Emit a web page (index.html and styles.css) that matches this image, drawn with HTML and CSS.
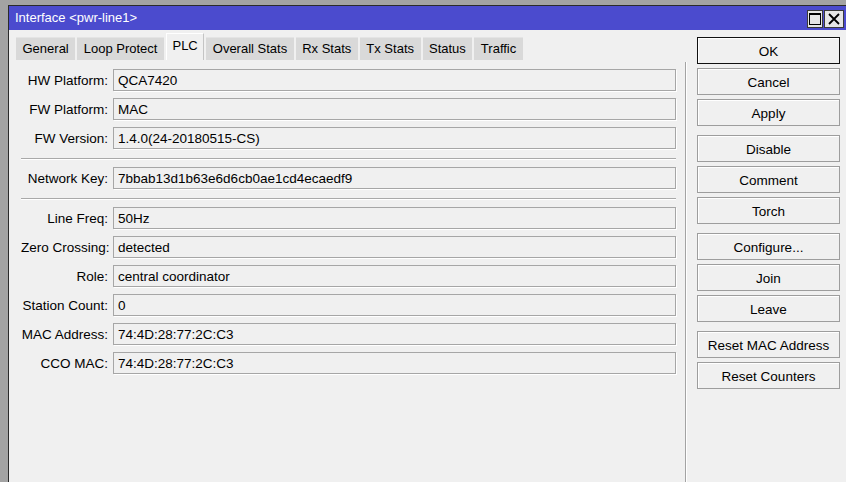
FILE: index.html
```html
<!DOCTYPE html>
<html lang="en">

<head>
    <meta charset="UTF-8">
    <title>Interface &lt;pwr-line1&gt;</title>
    <link rel="stylesheet" href="styles.css">
</head>

<body>

    <div class="window">
        <div class="titlebar">
            <span class="title">Interface &lt;pwr-line1&gt;</span>
            <div class="controls">
                <span class="ctl">
                    <svg width="14" height="14" viewBox="0 0 14 14">
                        <rect x="1.5" y="1.5" width="11" height="11" fill="none" stroke="#000" stroke-width="1"/>
                        <rect x="1" y="1" width="12" height="2" fill="#000"/>
                    </svg>
                </span>
                <span class="ctl">
                    <svg width="14" height="14" viewBox="0 0 14 14">
                        <path d="M2 2 L12 12 M12 2 L2 12" stroke="#000" stroke-width="1.8" fill="none"/>
                    </svg>
                </span>
            </div>
        </div>

        <div class="content">
            <div class="main">
                <div class="tabs">
                    <div class="tab">General</div>
                    <div class="tab">Loop Protect</div>
                    <div class="tab active">PLC</div>
                    <div class="tab">Overall Stats</div>
                    <div class="tab">Rx Stats</div>
                    <div class="tab">Tx Stats</div>
                    <div class="tab">Status</div>
                    <div class="tab">Traffic</div>
                </div>

                <div class="panel">
                    <div class="row"><label>HW Platform:</label><div class="field">QCA7420</div></div>
                    <div class="row"><label>FW Platform:</label><div class="field">MAC</div></div>
                    <div class="row"><label>FW Version:</label><div class="field">1.4.0(24-20180515-CS)</div></div>
                    <div class="sep"></div>
                    <div class="row"><label>Network Key:</label><div class="field">7bbab13d1b63e6d6cb0ae1cd4ecaedf9</div></div>
                    <div class="sep"></div>
                    <div class="row"><label>Line Freq:</label><div class="field">50Hz</div></div>
                    <div class="row"><label>Zero Crossing:</label><div class="field">detected</div></div>
                    <div class="row"><label>Role:</label><div class="field">central coordinator</div></div>
                    <div class="row"><label>Station Count:</label><div class="field">0</div></div>
                    <div class="row"><label>MAC Address:</label><div class="field">74:4D:28:77:2C:C3</div></div>
                    <div class="row"><label>CCO MAC:</label><div class="field">74:4D:28:77:2C:C3</div></div>
                </div>
            </div>

            <div class="divider"></div>

            <div class="side">
                <button class="btn default">OK</button>
                <button class="btn">Cancel</button>
                <button class="btn">Apply</button>
                <button class="btn group">Disable</button>
                <button class="btn">Comment</button>
                <button class="btn">Torch</button>
                <button class="btn group">Configure...</button>
                <button class="btn">Join</button>
                <button class="btn">Leave</button>
                <button class="btn group">Reset MAC Address</button>
                <button class="btn">Reset Counters</button>
            </div>
        </div>
    </div>

</body>

</html>
```

FILE: styles.css
```css
* {
    margin: 0;
    padding: 0;
    box-sizing: border-box;
}

html, body {
    height: 100%;
    overflow: hidden;
}

body {
    font-family: "Liberation Sans", Arial, sans-serif;
    font-size: 13.5px;
    color: #000;
    background-color: #a3a3a3;
    padding: 5px 0 0 8px;
}

.window {
    height: 100%;
    border-top: 1px solid #2b2b2b;
    border-left: 1px solid #2b2b2b;
    background-color: #f0f0f0;
    display: flex;
    flex-direction: column;
}

.titlebar {
    height: 24px;
    background-color: #4b4bce;
    color: #fff;
    font-size: 13px;
    display: flex;
    align-items: center;
    justify-content: space-between;
    padding: 0 2px 0 6px;
}

.title {
    padding-bottom: 1px;
}

.controls {
    display: flex;
    gap: 1px;
    margin-top: 1px;
}

.ctl {
    width: 16px;
    height: 18px;
    background-color: #e6e6e6;
    border: 1px solid #3a3a3a;
    display: flex;
    align-items: center;
    justify-content: center;
}

.ctl:last-child {
    width: 20px;
}

.content {
    flex: 1;
    display: flex;
}

.main {
    width: 676px;
}

.tabs {
    display: flex;
    align-items: flex-end;
    gap: 2px;
    height: 30px;
    padding-left: 7px;
}

.tab {
    height: 23px;
    line-height: 22px;
    padding: 0 6.5px;
    font-size: 13px;
    background-color: #d9d9d9;
    border-top: 1px solid #e4e4e4;
}

.tab.active {
    height: 27px;
    line-height: 23px;
    background-color: #f0f0f0;
    border-top: 1px solid #fff;
    border-left: 1px solid #fff;
    border-right: 1px solid #c4c4c4;
    padding: 0 5.5px;
}

.panel {
    display: flex;
    flex-direction: column;
    gap: 7px;
    padding: 9px 0 0 12px;
}

.row {
    display: flex;
    align-items: center;
    gap: 5px;
}

.row label {
    width: 87px;
    padding-top: 1px;
    text-align: right;
    white-space: nowrap;
}

.field {
    width: 563px;
    height: 22px;
    line-height: 20px;
    padding: 1px 0 0 4px;
    border: 1px solid #a6a6a6;
    box-shadow: 1px 1px 0 #fff;
}

.sep {
    height: 2px;
    width: 655px;
    margin-top: 2px;
    border-top: 1px solid #a9a9a9;
    border-bottom: 1px solid #fff;
}

.divider {
    width: 2px;
    margin-top: 32px;
    border-left: 1px solid #a3a3a3;
    border-right: 1px solid #fff;
}

.side {
    display: flex;
    flex-direction: column;
    gap: 4px;
    padding: 7px 0 0 10px;
}

.btn {
    width: 143px;
    height: 27px;
    padding-top: 1px;
    font-family: inherit;
    font-size: 13.5px;
    color: #000;
    background-color: #f0f0f0;
    border: 1px solid #9d9d9d;
    box-shadow: inset 1px 1px 0 #fff;
}

.btn.default {
    border-color: #111;
}

.btn.group {
    margin-top: 5px;
}
```
